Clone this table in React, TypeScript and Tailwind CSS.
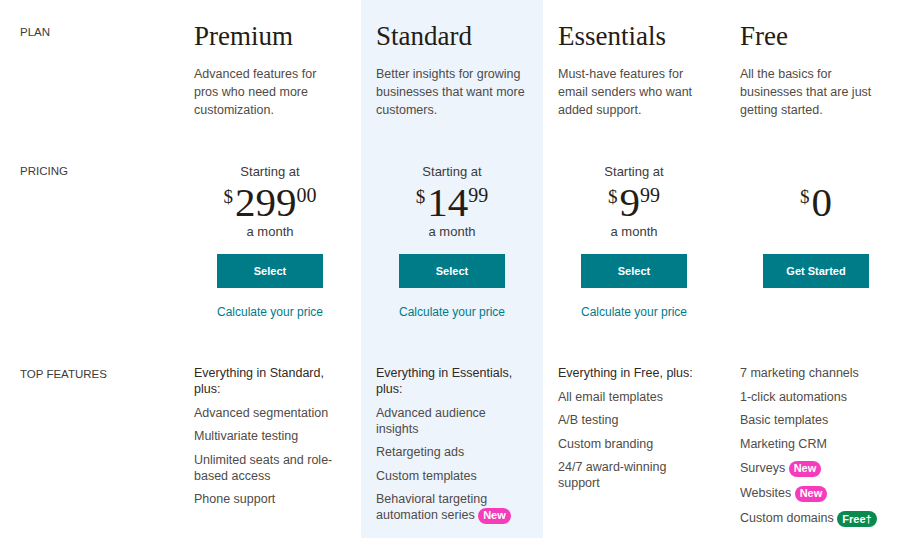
const plans = [
  {
    name: "Premium",
    desc: "Advanced features for pros who need more customization.",
    dollars: "299",
    cents: "00",
    cta: "Select",
    calc: true,
    lead: "Everything in Standard, plus:",
    features: [
      { text: "Advanced segmentation" },
      { text: "Multivariate testing" },
      { text: "Unlimited seats and role-based access" },
      { text: "Phone support" },
    ],
  },
  {
    name: "Standard",
    desc: "Better insights for growing businesses that want more customers.",
    dollars: "14",
    cents: "99",
    cta: "Select",
    calc: true,
    highlight: true,
    lead: "Everything in Essentials, plus:",
    features: [
      { text: "Advanced audience insights" },
      { text: "Retargeting ads" },
      { text: "Custom templates" },
      { text: "Behavioral targeting automation series", badge: "New" },
    ],
  },
  {
    name: "Essentials",
    desc: "Must-have features for email senders who want added support.",
    dollars: "9",
    cents: "99",
    cta: "Select",
    calc: true,
    lead: "Everything in Free, plus:",
    features: [
      { text: "All email templates" },
      { text: "A/B testing" },
      { text: "Custom branding" },
      { text: "24/7 award-winning support" },
    ],
  },
  {
    name: "Free",
    desc: "All the basics for businesses that are just getting started.",
    dollars: "0",
    cents: "",
    cta: "Get Started",
    calc: false,
    lead: "",
    features: [
      { text: "7 marketing channels" },
      { text: "1-click automations" },
      { text: "Basic templates" },
      { text: "Marketing CRM" },
      { text: "Surveys", badge: "New" },
      { text: "Websites", badge: "New" },
      { text: "Custom domains", badge: "Free\u2020", green: true },
    ],
  },
];

type Plan = (typeof plans)[number];

function Badge({ label, green }: { label: string; green?: boolean }) {
  return (
    <span
      className={`inline-flex items-center h-[16px] px-[5px] rounded-full text-white text-[11px] font-bold align-middle leading-none ${
        green ? "bg-[#0b8a4f]" : "bg-[#f43cbc]"
      }`}
    >
      {label}
    </span>
  );
}

function Price({ plan }: { plan: Plan }) {
  const paid = plan.calc;
  return (
    <div className="flex flex-col items-center">
      <div className={`h-[18px] leading-[18px] text-[13px] text-[#3d3a38] ${paid ? "" : "invisible"}`}>
        Starting at
      </div>
      <div
        className="flex items-start h-[42px] pt-[1px] text-[#241c15]"
        style={{ fontFamily: '"Liberation Serif", "DejaVu Serif", serif' }}
      >
        <span className="text-[19px] leading-[19px] mt-[5px] mr-[2px]">$</span>
        <span className="text-[41px] leading-[40px]">{plan.dollars}</span>
        {plan.cents && <span className="text-[20px] leading-[20px] mt-[3px]">{plan.cents}</span>}
      </div>
      <div className={`h-[18px] leading-[18px] text-[13px] text-[#3d3a38] ${paid ? "" : "invisible"}`}>
        a month
      </div>
      <button className="mt-[13px] h-[34px] w-[106px] bg-[#007c89] text-white text-[11px] font-bold">
        {plan.cta}
      </button>
      {paid && (
        <div className="mt-[16px] text-[12px] leading-[16px] text-[#007c89]">Calculate your price</div>
      )}
    </div>
  );
}

export default function App() {
  const cell = (p: Plan) => (p.highlight ? "bg-[#edf4fc]" : "");
  return (
    <div
      className="w-[903px] h-[538px] overflow-hidden bg-white text-[#4f4b48]"
      style={{ fontFamily: '"Liberation Sans", Arial, sans-serif' }}
    >
      <div className="grid grid-cols-[179px_182px_182px_182px_182px] grid-rows-[150px_200px_188px]">
        {/* Plan row */}
        <div className="pl-[20px] pt-[25px] text-[11.5px] leading-[14px] text-[#3b3b3b]">PLAN</div>
        {plans.map((p) => (
          <div key={p.name} className={`px-[15px] pt-[20px] ${cell(p)}`}>
            <h2
              className="text-[27px] leading-[32px] text-[#241c15]"
              style={{ fontFamily: '"Liberation Serif", "DejaVu Serif", serif' }}
            >
              {p.name}
            </h2>
            <p className="mt-[13px] text-[12.5px] leading-[18px] pr-[3px]">{p.desc}</p>
          </div>
        ))}

        {/* Pricing row */}
        <div className="pl-[20px] pt-[14px] text-[11.5px] leading-[14px] text-[#3b3b3b]">PRICING</div>
        {plans.map((p) => (
          <div key={p.name} className={`pt-[13px] ${cell(p)}`}>
            <Price plan={p} />
          </div>
        ))}

        {/* Features row */}
        <div className="pl-[20px] pt-[17px] text-[11.5px] leading-[14px] text-[#3b3b3b]">TOP FEATURES</div>
        {plans.map((p) => (
          <div key={p.name} className={`px-[15px] pt-[15px] ${cell(p)}`}>
            <ul className="flex flex-col gap-[7.5px] text-[12.5px] leading-[16px] pr-[6px]">
              {p.lead && <li className="text-[#2f2a27]">{p.lead}</li>}
              {p.features.map((f) => (
                <li key={f.text} className={f.badge && !p.highlight ? "mt-[1px]" : ""}>
                  {f.text}
                  {f.badge && (
                    <>
                      {" "}
                      <Badge label={f.badge} green={f.green} />
                    </>
                  )}
                </li>
              ))}
            </ul>
          </div>
        ))}
      </div>
    </div>
  );
}
